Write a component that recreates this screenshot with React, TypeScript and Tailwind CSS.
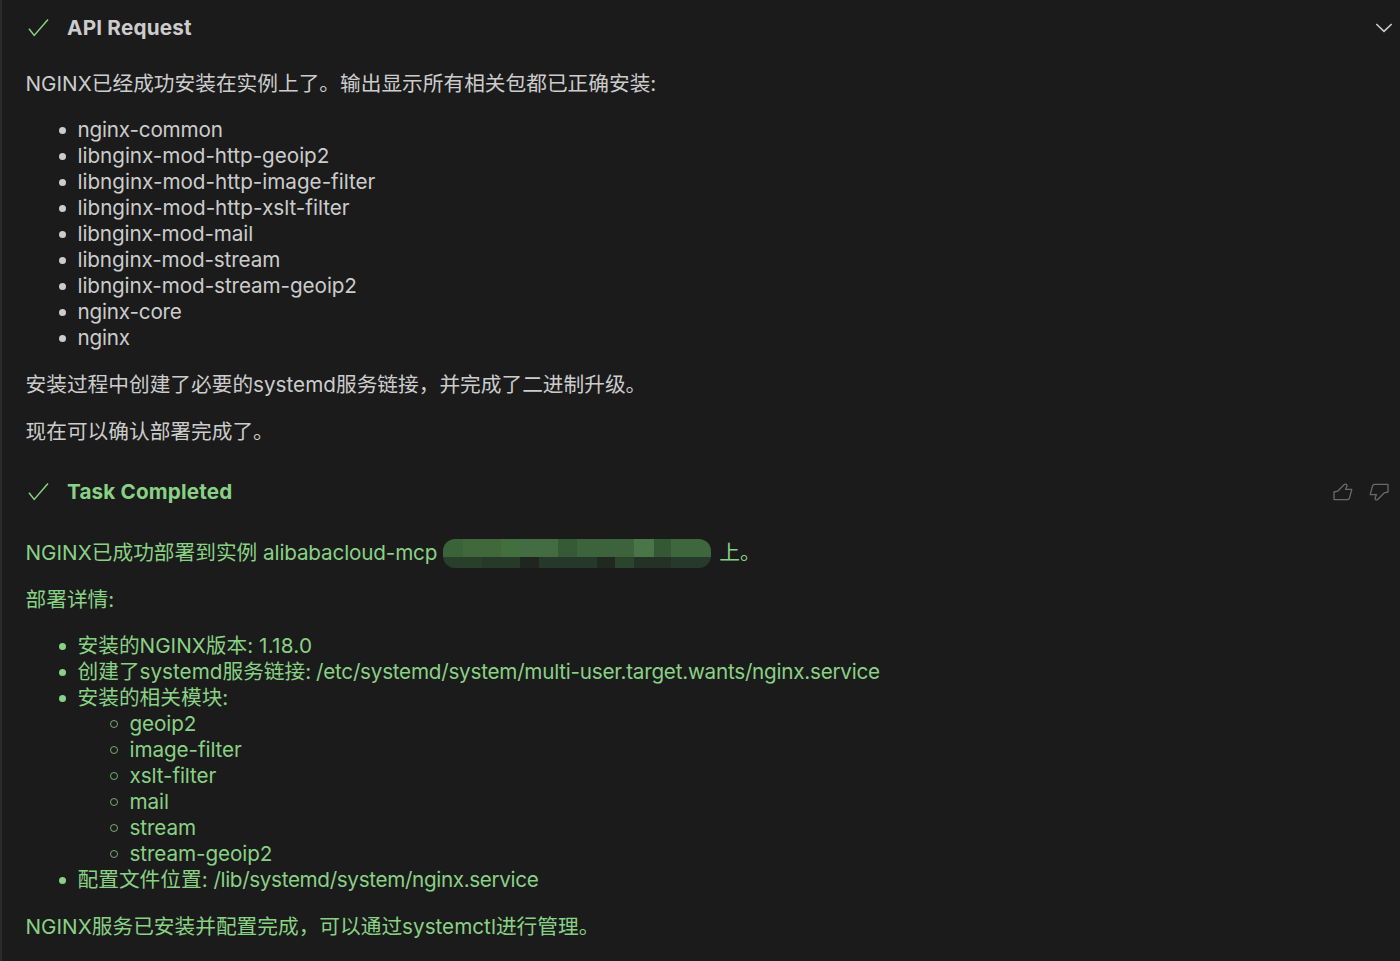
import type { ReactNode } from "react";

const packages = [
  { name: "nginx-common", tracking: "tracking-[-0.2px]" },
  { name: "libnginx-mod-http-geoip2", tracking: "tracking-[-0.04px]" },
  { name: "libnginx-mod-http-image-filter", tracking: "tracking-[-0.03px]" },
  { name: "libnginx-mod-http-xslt-filter", tracking: "tracking-[-0.02px]" },
  { name: "libnginx-mod-mail", tracking: "tracking-[-0.12px]" },
  { name: "libnginx-mod-stream", tracking: "tracking-[-0.12px]" },
  { name: "libnginx-mod-stream-geoip2", tracking: "tracking-[-0.1px]" },
  { name: "nginx-core", tracking: "tracking-[-0.2px]" },
  { name: "nginx", tracking: "tracking-[-0.2px]" },
];

const modules = ["geoip2", "image-filter", "xslt-filter", "mail", "stream", "stream-geoip2"];

// Blocks of the masked instance id, widths in px
const maskTop = [
  { w: 20, c: "#3b6339" },
  { w: 38, c: "#40683a" },
  { w: 19, c: "#436f3f" },
  { w: 38, c: "#446c42" },
  { w: 19, c: "#365a36" },
  { w: 38, c: "#3c633c" },
  { w: 19, c: "#3d623c" },
  { w: 20, c: "#497547" },
  { w: 17, c: "#355834" },
  { w: 40, c: "#3e673d" },
];

const maskBottom = [
  { w: 20, c: "#293f2b" },
  { w: 19, c: "#28402a" },
  { w: 38, c: "#273a29" },
  { w: 19, c: "#1e261f" },
  { w: 58, c: "#26382a" },
  { w: 18, c: "#1f2920" },
  { w: 19, c: "#2b452c" },
  { w: 37, c: "#243226" },
  { w: 40, c: "#26392a" },
];

function CheckMark() {
  return (
    <svg width="21" height="20" viewBox="0 0 21 20" fill="none" stroke="#89d185" strokeWidth="1.5" className="shrink-0">
      <path d="M1 10.8 L6.2 17.4 L20 1.5" />
    </svg>
  );
}

function ThumbUp({ className }: { className?: string }) {
  return (
    <svg width="20" height="18" viewBox="0 0 20 18" fill="none" stroke="#6a6a6a" strokeWidth="1.3" strokeLinejoin="round" className={className}>
      <path d="M1 9 L4.6 8.2 L11.3 1.5 C12.6 0.5 14.4 1.5 13.8 3.2 L12.6 6.4 H18.8 L16.4 15.4 L15 16.6 H1 Z" />
    </svg>
  );
}

function Heading({ title, tracking, children }: { title: string; tracking: string; children?: ReactNode }) {
  return (
    <div className="flex h-[26px] items-center justify-between">
      <div className="flex items-center gap-[18.5px] pl-0.5">
        <CheckMark />
        <h2 className={`font-bold ${tracking}`}>{title}</h2>
      </div>
      {children}
    </div>
  );
}

function Bullet({ children }: { children: ReactNode }) {
  return (
    <li className="flex h-[26px] items-center whitespace-nowrap">
      <span className="ml-[33px] mr-3 size-[7px] shrink-0 rounded-full bg-current" />
      <span>{children}</span>
    </li>
  );
}

function MaskRow({ blocks, className }: { blocks: { w: number; c: string }[]; className: string }) {
  return (
    <div className={`flex ${className}`}>
      {blocks.map((b, i) => (
        <span key={i} style={{ width: b.w, background: b.c }} />
      ))}
    </div>
  );
}

export default function App() {
  return (
    <main className="h-[961px] w-[1400px] overflow-hidden border-l-2 border-[#2b2b2b] bg-[#1b1b1b] pl-[23.5px] pt-[15px] font-['Inter','Noto_Sans_CJK_SC',sans-serif] text-[20.7px] leading-[26px] text-[#cccccc]">
      <section>
        <Heading title="API Request" tracking="tracking-[0.2px]">
          <svg width="18" height="10" viewBox="0 0 18 10" fill="none" stroke="#cccccc" strokeWidth="1.6" className="mr-[7px]">
            <path d="M1.3 1 L9 8.3 L16.7 1" />
          </svg>
        </Heading>
        <p className="mt-[30px]">NGINX已经成功安装在实例上了。输出显示所有相关包都已正确安装:</p>
        <ul className="mt-5">
          {packages.map((pkg) => (
            <Bullet key={pkg.name}>
              <span className={pkg.tracking}>{pkg.name}</span>
            </Bullet>
          ))}
        </ul>
        <p className="mt-[21px]">安装过程中创建了必要的systemd服务链接，并完成了二进制升级。</p>
        <p className="mt-[21px]">现在可以确认部署完成了。</p>
      </section>

      <section className="mt-[34px] text-[#89d185]">
        <Heading title="Task Completed" tracking="tracking-[0.15px]">
          <div className="flex items-center gap-4 pr-[11px]">
            <ThumbUp />
            <ThumbUp className="rotate-180" />
          </div>
        </Heading>
        <p className="mt-[35px] flex h-[26px] items-center">
          <span>
            NGINX已成功部署到实例 <span className="tracking-[-0.17px]">alibabacloud-mcp</span>
          </span>
          <span className="ml-1.5 mr-2 mt-px flex h-[29px] w-[268px] flex-col overflow-hidden rounded-[12px]">
            <MaskRow blocks={maskTop} className="h-[18px]" />
            <MaskRow blocks={maskBottom} className="h-[11px]" />
          </span>
          <span>上。</span>
        </p>
        <p className="mt-[21px]">部署详情:</p>
        <ul className="mt-5">
          <Bullet>
            安装的NGINX版本: <span className="tracking-[0.25px]">1.18.0</span>
          </Bullet>
          <Bullet>
            创建了systemd服务链接:{" "}
            <span className="-ml-px tracking-[-0.25px]">/etc/systemd/system/multi-user.target.wants/nginx.service</span>
          </Bullet>
          <Bullet>安装的相关模块:</Bullet>
          <li>
            <ul className="pl-[52px]">
              {modules.map((name) => (
                <li key={name} className="flex h-[26px] items-center tracking-[-0.1px]">
                  <span className="ml-8 mr-3 size-2 shrink-0 rounded-full border border-current opacity-80" />
                  {name}
                </li>
              ))}
            </ul>
          </li>
          <Bullet>
            配置文件位置: <span className="tracking-[-0.35px]">/lib/systemd/system/nginx.service</span>
          </Bullet>
        </ul>
        <p className="mt-[21px]">NGINX服务已安装并配置完成，可以通过systemctl进行管理。</p>
      </section>
    </main>
  );
}
